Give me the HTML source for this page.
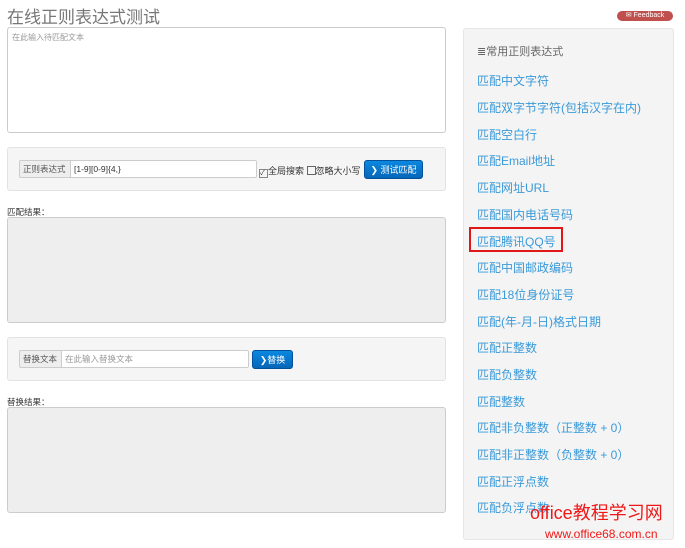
<!DOCTYPE html>
<html><head><meta charset="utf-8"><style>
*{box-sizing:border-box;margin:0;padding:0}
body{width:685px;height:548px;background:#fff;font-family:"Liberation Sans","Noto Sans CJK SC",sans-serif;position:relative;overflow:hidden;color:#333}
.a{position:absolute}
.title{left:7px;top:3px;font-size:17px;color:#777}
.ta{left:7px;top:27px;width:439px;height:106px;border:1px solid #ccc;border-radius:3px;padding:4px;font-size:8px;color:#999}
.panel{left:7px;width:439px;height:44px;background:#f5f5f5;border:1px solid #e3e3e3;border-radius:3px}
.lab{background:#eee;border:1px solid #ccc;font-size:8.5px;color:#555;height:18px;line-height:16px;padding:0 3px;border-radius:2px 0 0 2px}
.inp{background:#fff;border:1px solid #ccc;font-size:8.5px;height:18px;line-height:16px;padding:0 3px;border-radius:0 2px 2px 0}
.btn{background:linear-gradient(#0a88e0,#0566b8);color:#fff;font-size:9px;border-radius:3px;height:19px;line-height:19px;text-align:center;border:1px solid #04519b}
.res{left:7px;width:439px;height:106px;background:#eee;border:1px solid #ccc;border-radius:3px}
.small{font-size:8.5px;color:#333}
.side{left:463px;top:28px;width:211px;height:512px;background:#f4f4f4;border:1px solid #e6e6e6;border-radius:3px}
.lk{left:477px;font-size:12px;color:#3a9ad9;white-space:nowrap}
</style></head><body>
<div class="a title">在线正则表达式测试</div>
<div class="a ta">在此输入待匹配文本</div>
<div class="a panel" style="top:147px"></div>
<div class="a lab" style="left:19px;top:160px;width:52px">正则表达式</div>
<div class="a inp" style="left:70px;top:160px;width:187px">[1-9][0-9]{4,}</div>
<div class="a small" style="left:259px;top:164px;font-size:9px"><span style="display:inline-block;width:9px;height:9px;border:1px solid #888;vertical-align:-1px;font-size:7px;line-height:7px">✓</span>全局搜索 <span style="display:inline-block;width:9px;height:9px;border:1px solid #666;vertical-align:-1px"></span>忽略大小写</div>
<div class="a btn" style="left:364px;top:160px;width:59px">❯ 测试匹配</div>
<div class="a small" style="left:7px;top:206px">匹配结果：</div>
<div class="a res" style="top:217px"></div>
<div class="a panel" style="top:337px"></div>
<div class="a lab" style="left:19px;top:350px;width:43px">替换文本</div>
<div class="a inp" style="left:61px;top:350px;width:188px;color:#999">在此输入替换文本</div>
<div class="a btn" style="left:252px;top:350px;width:41px">❯替换</div>
<div class="a small" style="left:7px;top:396px">替换结果：</div>
<div class="a res" style="top:407px"></div>
<div class="a" style="left:617px;top:11px;width:56px;height:10px;background:#c0504d;border-radius:5px;color:#fff;font-size:7px;line-height:10px;text-align:center">✉ Feedback</div>
<div class="a side"></div>
<div class="a" style="left:477px;top:43px;font-size:11px;color:#666">≣常用正则表达式</div>
<div class="a lk" style="top:72px">匹配中文字符</div>
<div class="a lk" style="top:99px">匹配双字节字符(包括汉字在内)</div>
<div class="a lk" style="top:126px">匹配空白行</div>
<div class="a lk" style="top:152px">匹配Email地址</div>
<div class="a lk" style="top:179px">匹配网址URL</div>
<div class="a lk" style="top:206px">匹配国内电话号码</div>
<div class="a lk" style="top:233px">匹配腾讯QQ号</div>
<div class="a" style="left:469px;top:227px;width:94px;height:25px;border:2px solid #e01818"></div>
<div class="a lk" style="top:259px">匹配中国邮政编码</div>
<div class="a lk" style="top:286px">匹配18位身份证号</div>
<div class="a lk" style="top:313px">匹配(年-月-日)格式日期</div>
<div class="a lk" style="top:339px">匹配正整数</div>
<div class="a lk" style="top:366px">匹配负整数</div>
<div class="a lk" style="top:393px">匹配整数</div>
<div class="a lk" style="top:419px">匹配非负整数（正整数 + 0）</div>
<div class="a lk" style="top:446px">匹配非正整数（负整数 + 0）</div>
<div class="a lk" style="top:473px">匹配正浮点数</div>
<div class="a lk" style="top:499px">匹配负浮点数</div>
<div class="a" style="left:530px;top:499px;font-size:18px;color:#f01818;white-space:nowrap">office教程学习网</div>
<div class="a" style="left:545px;top:527px;font-size:12px;color:#f01818;white-space:nowrap">www.office68.com.cn</div>
</body></html>
